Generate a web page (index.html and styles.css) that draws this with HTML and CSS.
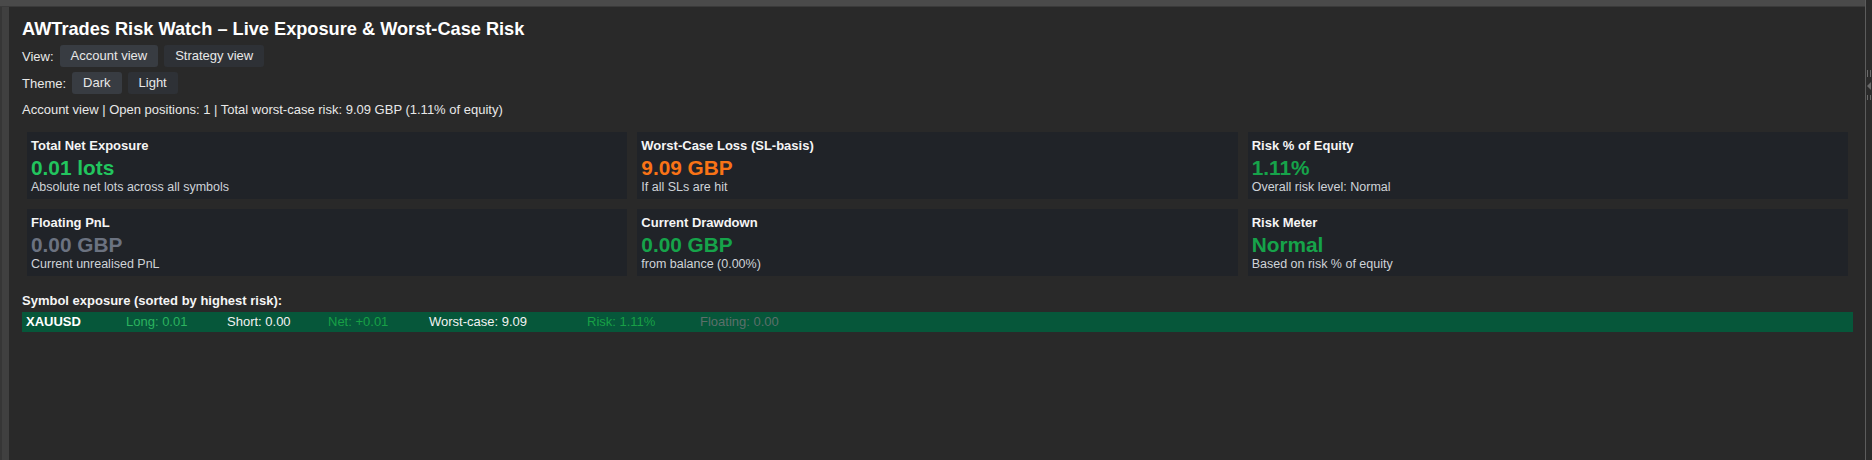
FILE: index.html
```html
<!DOCTYPE html>
<html lang="en">
<head>
<meta charset="utf-8">
<title>AWTrades Risk Watch</title>
<link rel="stylesheet" href="styles.css">
</head>
<body>
<div class="app">
  <div class="topbar"></div>
  <div class="topbar-end"></div>
  <div class="left-edge"></div>
  <main class="panel">
    <h1 class="title">AWTrades Risk Watch – Live Exposure &amp; Worst-Case Risk</h1>
    <div class="toggle-row">
      <span class="toggle-label">View:</span>
      <button class="btn btn-active">Account view</button>
      <button class="btn">Strategy view</button>
    </div>
    <div class="toggle-row">
      <span class="toggle-label">Theme:</span>
      <button class="btn btn-active">Dark</button>
      <button class="btn">Light</button>
    </div>
    <div class="status">Account view | Open positions: 1 | Total worst-case risk: 9.09 GBP (1.11% of equity)</div>

    <div class="cards">
      <div class="card">
        <div class="card-label">Total Net Exposure</div>
        <div class="card-value v-bright">0.01 lots</div>
        <div class="card-sub">Absolute net lots across all symbols</div>
      </div>
      <div class="card">
        <div class="card-label">Worst-Case Loss (SL-basis)</div>
        <div class="card-value v-orange">9.09 GBP</div>
        <div class="card-sub">If all SLs are hit</div>
      </div>
      <div class="card">
        <div class="card-label">Risk % of Equity</div>
        <div class="card-value v-green">1.11%</div>
        <div class="card-sub">Overall risk level: Normal</div>
      </div>
      <div class="card">
        <div class="card-label">Floating PnL</div>
        <div class="card-value v-gray">0.00 GBP</div>
        <div class="card-sub">Current unrealised PnL</div>
      </div>
      <div class="card">
        <div class="card-label">Current Drawdown</div>
        <div class="card-value v-green">0.00 GBP</div>
        <div class="card-sub">from balance (0.00%)</div>
      </div>
      <div class="card">
        <div class="card-label">Risk Meter</div>
        <div class="card-value v-green">Normal</div>
        <div class="card-sub">Based on risk % of equity</div>
      </div>
    </div>

    <div class="section-title">Symbol exposure (sorted by highest risk):</div>
    <div class="symbol-row">
      <span class="sym">XAUUSD</span>
      <span class="c-long">Long: 0.01</span>
      <span class="c-white">Short: 0.00</span>
      <span class="c-net">Net: +0.01</span>
      <span class="c-white">Worst-case: 9.09</span>
      <span class="c-net">Risk: 1.11%</span>
      <span class="c-float">Floating: 0.00</span>
    </div>
  </main>
  <div class="right-edge">
    <span class="handle handle-bars"></span>
    <span class="handle handle-arrow"></span>
    <span class="handle handle-bars small"></span>
  </div>
</div>
</body>
</html>
```

FILE: styles.css
```css
* { box-sizing: border-box; }

html, body {
  margin: 0;
  padding: 0;
  height: 100%;
}

body {
  background: #292929;
  font-family: "Liberation Sans", Arial, sans-serif;
  font-size: 13px;
  color: #e6e6e6;
  overflow: hidden;
}

.app {
  display: grid;
  grid-template-columns: 9px 1fr 7px;
  grid-template-rows: 7px 1fr;
  height: 460px;
}

.topbar {
  grid-column: 1 / 3;
  background: #4a4a4a;
  border-bottom: 1px solid #3a3a3a;
}

.topbar-end {
  background: #2b2b2b;
  border-left: 1px solid #5c5c5c;
}

.left-edge {
  background: #404040;
  border-left: 2px solid #363636;
}

.panel {
  background: #292929;
  padding: 12px 12px 0 13px;
  min-width: 0;
}

.right-edge {
  background: #2b2b2b;
  border-left: 1px solid #5c5c5c;
  display: flex;
  flex-direction: column;
  align-items: center;
  padding-top: 63px;
  gap: 5px;
}

.handle { display: block; }

.handle-bars {
  width: 4px;
  height: 7px;
  border-left: 1px solid #6a6a6a;
  border-right: 1px solid #6a6a6a;
}

.handle-bars.small { height: 5px; }

.handle-arrow {
  width: 0;
  height: 0;
  border-top: 4px solid transparent;
  border-bottom: 4px solid transparent;
  border-right: 4px solid #6a6a6a;
}

.title {
  margin: 0 0 5px;
  font-size: 18.2px;
  font-weight: bold;
  color: #ffffff;
  line-height: 21px;
}

.toggle-row {
  display: flex;
  align-items: center;
  gap: 6px;
  margin-bottom: 5px;
}

.toggle-label {
  color: #e8e8e8;
}

.btn {
  font-family: inherit;
  font-size: 13px;
  line-height: 14px;
  padding: 4px 11px;
  border: none;
  border-radius: 3px;
  background: #2e3136;
  color: #e8e8e8;
}

.btn-active {
  background: #383c42;
}

.status {
  margin-top: 8px;
  line-height: 15px;
  color: #e8e8e8;
}

.cards {
  display: grid;
  grid-template-columns: repeat(3, 1fr);
  gap: 10px;
  margin: 15px 5px 0 5px;
}

.card {
  background: #202328;
  padding: 6px 5px 4px 4px;
  height: 67px;
}

.card-label {
  font-weight: bold;
  font-size: 13px;
  line-height: 15px;
  color: #f5f5f5;
  margin-bottom: 3px;
}

.card-value {
  font-weight: bold;
  font-size: 20.8px;
  line-height: 24px;
}

.card-sub {
  font-size: 12.5px;
  line-height: 15px;
  color: #cfd3d8;
}

.v-bright { color: #22c55e; }
.v-orange { color: #f97316; }
.v-green { color: #16a34a; }
.v-gray { color: #6b7280; }

.section-title {
  margin-top: 17px;
  font-weight: bold;
  line-height: 15px;
  color: #f5f5f5;
}

.symbol-row {
  margin-top: 4px;
  display: grid;
  grid-template-columns: 100px 101px 101px 101px 158px 113px 1fr;
  background: #06573a;
  line-height: 20px;
  padding-left: 4px;
  white-space: nowrap;
}

.sym { font-weight: bold; color: #ffffff; }
.c-long { color: #2cb35f; }
.c-white { color: #f2f2f2; }
.c-net { color: #18a046; }
.c-float { color: #5c6f6a; }
```
